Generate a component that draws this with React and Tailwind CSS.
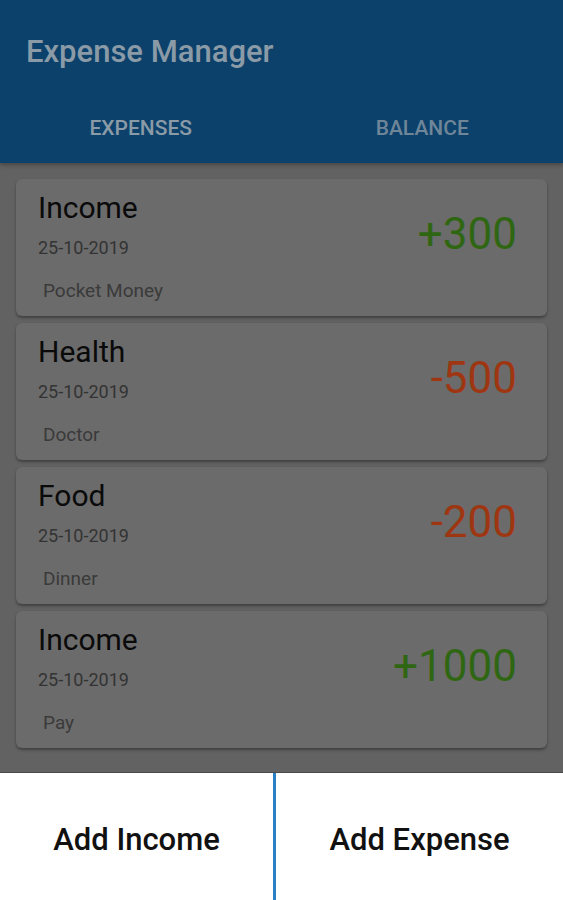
const entries = [
  { title: 'Income', date: '25-10-2019', note: 'Pocket Money', amount: '+300', positive: true },
  { title: 'Health', date: '25-10-2019', note: 'Doctor', amount: '-500', positive: false },
  { title: 'Food', date: '25-10-2019', note: 'Dinner', amount: '-200', positive: false },
  { title: 'Income', date: '25-10-2019', note: 'Pay', amount: '+1000', positive: true },
]

function EntryCard({ entry }) {
  return (
    <div className="flex items-start justify-between h-[137px] rounded-md bg-[#6b6b6b] shadow-[0_2px_3px_rgba(0,0,0,0.35)] pl-[22px] pr-[30px] pt-[12px]">
      <div className="flex flex-col">
        <p className="text-[30px] leading-[34px] text-[#0a0a0a]">{entry.title}</p>
        <p className="text-[18px] leading-[22px] text-[#333333] mt-[12px]">{entry.date}</p>
        <p className="text-[19px] leading-[22px] text-[#3a3a3a] mt-[21px] ml-[5px]">{entry.note}</p>
      </div>
      <p
        className={`text-[44px] leading-[44px] mt-[21px] ${
          entry.positive ? 'text-[#2f6612]' : 'text-[#9e3612]'
        }`}
      >
        {entry.amount}
      </p>
    </div>
  )
}

export default function App() {
  return (
    <div className="w-[563px] h-[900px] flex flex-col bg-[#626262] font-['Roboto',sans-serif] overflow-hidden">
      {/* Header */}
      <div className="h-[163px] bg-[#0c416b] flex flex-col shadow-[0_2px_4px_rgba(0,0,0,0.3)]">
        <h1 className="text-[31px] font-medium text-[#8a9aa6] pl-[26px] pt-[34px] leading-[36px]">
          Expense Manager
        </h1>
        <div className="flex mt-[46px]">
          <div className="flex-1 text-center text-[21px] leading-[24px] font-medium text-[#8a9aa6]">
            EXPENSES
          </div>
          <div className="flex-1 text-center text-[21px] leading-[24px] font-medium text-[#6f8699]">
            BALANCE
          </div>
        </div>
      </div>

      {/* List */}
      <div className="flex-1 flex flex-col gap-[7px] px-[16px] pt-[16px]">
        {entries.map((e, i) => (
          <EntryCard key={i} entry={e} />
        ))}
      </div>

      {/* Bottom sheet */}
      <div className="h-[128px] bg-white flex border-t border-[#4a4a4a]">
        <button className="w-[273px] flex items-center justify-center text-[31px] font-medium text-[#111] pt-[8px]">
          Add Income
        </button>
        <div className="w-[3px] bg-[#2a80c2]" />
        <button className="flex-1 flex items-center justify-center text-[31px] font-medium text-[#111] pt-[8px]">
          Add Expense
        </button>
      </div>
    </div>
  )
}
